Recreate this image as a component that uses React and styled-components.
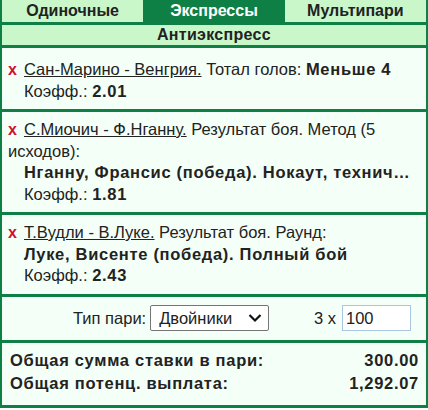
import React from 'react'
import styled, { createGlobalStyle } from 'styled-components'

const GREEN = '#0e7f45'

const GlobalStyle = createGlobalStyle`
  html, body {
    margin: 0;
    padding: 0;
    background: #fff;
  }
  body {
    font-family: "Liberation Sans", Arial, sans-serif;
    font-size: 16.5px;
    color: #222;
  }
`

const Slip = styled.div`
  width: 428px;
  box-sizing: border-box;
  border-left: 2px solid ${GREEN};
  border-right: 2px solid ${GREEN};
  border-bottom: 3px solid ${GREEN};
  background: #f4fff7;
`

const Tabs = styled.div`
  display: grid;
  grid-template-columns: 1fr 1fr 1fr;
  border-bottom: 3px solid ${GREEN};
`

const Tab = styled.div`
  height: 22px;
  line-height: 22px;
  text-align: center;
  font-weight: bold;
  font-size: 16px;
  background: ${props => props.active ? GREEN : '#c9f7c9'};
  color: ${props => props.active ? '#fff' : '#222'};
`

const Title = styled.div`
  height: 20px;
  line-height: 20px;
  text-align: center;
  font-weight: bold;
  font-size: 16px;
  letter-spacing: 0.3px;
  background: #c9f7c9;
  border-bottom: 3px solid ${GREEN};
`

const Bet = styled.div`
  padding: ${props => props.first ? '11px' : '7px'} 10px 7px 6px;
  border-bottom: 3px solid ${GREEN};
  line-height: 21.5px;
`

const Line = styled.div`
  padding-left: ${props => props.indent ? '16px' : '0'};
  white-space: ${props => props.clip ? 'nowrap' : 'normal'};
  overflow: hidden;
  text-overflow: ellipsis;
  font-weight: ${props => props.clip ? 'bold' : 'normal'};
  letter-spacing: ${props => props.clip ? '0.7px' : 'normal'};
`

const Remove = styled.span`
  display: inline-block;
  width: 16px;
  color: #d0102e;
  font-weight: bold;
  font-size: 16px;
`

const Event = styled.span`
  text-decoration: underline;
`

const Bold = styled.span`
  font-weight: bold;
  letter-spacing: 0.7px;
`

const TypeRow = styled.div`
  display: flex;
  align-items: center;
  height: 43px;
  padding: 0 15px 0 71px;
  border-bottom: 3px solid ${GREEN};
`

const Label = styled.span`
  margin-right: 4px;
`

const Select = styled.div`
  display: flex;
  align-items: center;
  justify-content: space-between;
  box-sizing: border-box;
  width: 119px;
  height: 26px;
  padding: 0 6px 0 8px;
  background: #fff;
  border: 1px solid #767676;
  border-radius: 2px;
`

const Times = styled.span`
  margin-left: auto;
  margin-right: 6px;
`

const Input = styled.div`
  box-sizing: border-box;
  width: 69px;
  height: 26px;
  line-height: 24px;
  padding-left: 3px;
  background: #fff;
  border: 1px solid #a7c6e0;
`

const Summary = styled.div`
  padding: 6px 7px 10px 8px;
`

const SumRow = styled.div`
  display: flex;
  justify-content: space-between;
  font-weight: bold;
  letter-spacing: 0.7px;
  line-height: 23px;
`

const Chevron = () => (
  <svg width="14" height="10" viewBox="0 0 14 10">
    <path d="M1.5 2 L7 7.5 L12.5 2" fill="none" stroke="#111" strokeWidth="2.2" />
  </svg>
)

const bets = [
  {
    event: 'Сан-Марино - Венгрия.',
    market: ' Тотал голов: ',
    pickInline: 'Меньше 4',
    odds: '2.01'
  },
  {
    event: 'С.Миочич - Ф.Нганну.',
    market: ' Результат боя. Метод (5 исходов):',
    pick: 'Нганну, Франсис (победа). Нокаут, технический нокаут',
    odds: '1.81'
  },
  {
    event: 'Т.Вудли - В.Луке.',
    market: ' Результат боя. Раунд:',
    pick: 'Луке, Висенте (победа). Полный бой',
    odds: '2.43'
  }
]

export default function App () {
  return (
    <>
      <GlobalStyle />
      <Slip>
        <Tabs>
          <Tab>Одиночные</Tab>
          <Tab active>Экспрессы</Tab>
          <Tab>Мультипари</Tab>
        </Tabs>
        <Title>Антиэкспресс</Title>
        {bets.map((bet, i) => (
          <Bet key={bet.event} first={i === 0}>
            <Line>
              <Remove>x</Remove>
              <Event>{bet.event}</Event>
              {bet.market}
              {bet.pickInline && <Bold>{bet.pickInline}</Bold>}
            </Line>
            {bet.pick && <Line indent clip>{bet.pick}</Line>}
            <Line indent>Коэфф.: <Bold>{bet.odds}</Bold></Line>
          </Bet>
        ))}
        <TypeRow>
          <Label>Тип пари:</Label>
          <Select>
            <span>Двойники</span>
            <Chevron />
          </Select>
          <Times>3 x</Times>
          <Input>100</Input>
        </TypeRow>
        <Summary>
          <SumRow><span>Общая сумма ставки в пари:</span><span>300.00</span></SumRow>
          <SumRow><span>Общая потенц. выплата:</span><span>1,292.07</span></SumRow>
        </Summary>
      </Slip>
    </>
  )
}
